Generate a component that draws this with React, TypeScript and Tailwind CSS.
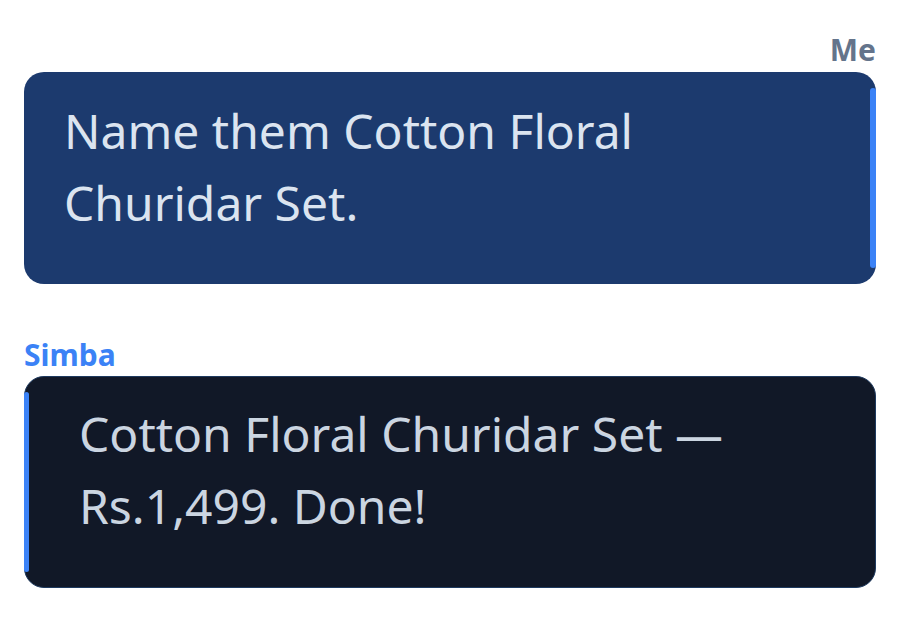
export default function App() {
  return (
    <div
      className="w-[900px] h-[620px] bg-white px-[24px] pt-[32px]"
      style={{ fontFamily: '"Noto Sans", "Open Sans", sans-serif' }}
    >
      <div className="flex flex-col items-end">
        <div className="text-[30px] leading-[36px] font-bold text-[#64748b] mb-[4px]">Me</div>
        <div className="w-full h-[212px] rounded-[20px] bg-[#1c3a6e] flex">
          <div className="flex-1 pl-[40px] pt-[23px] text-[48px] leading-[72px] text-[#dbe4f0]">
            <div className="w-[640px]">Name them Cotton Floral Churidar Set.</div>
          </div>
          <div className="w-[6px] my-[16px] rounded-full bg-[#3b82f6]" />
        </div>
      </div>
      <div className="flex flex-col items-start mt-[53px]">
        <div className="text-[30px] leading-[36px] font-bold text-[#3b82f6] mb-[3px]">Simba</div>
        <div className="w-full h-[212px] rounded-[20px] bg-[#111827] border border-[#1e3a5f] flex">
          <div className="w-[5px] -ml-px my-[15px] rounded-full bg-[#3b82f6]" />
          <div className="flex-1 pl-[50px] pt-[21px] text-[48px] leading-[72px] text-[#cbd5e1]">
            <div className="w-[680px]">Cotton Floral Churidar Set — Rs.1,499. Done!</div>
          </div>
        </div>
      </div>
    </div>
  );
}
